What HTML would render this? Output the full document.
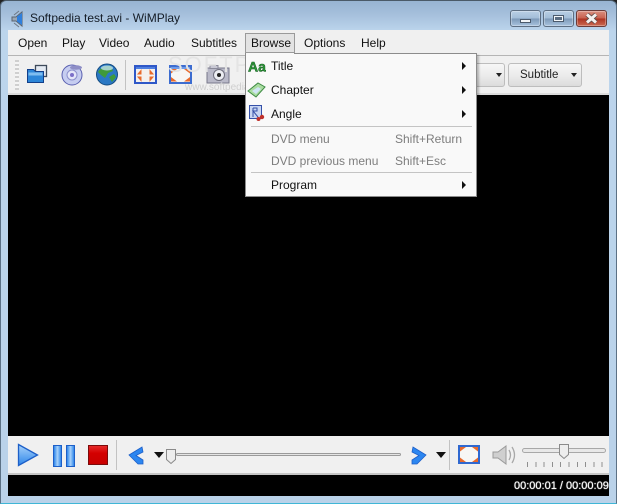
<!DOCTYPE html>
<html><head><meta charset="utf-8">
<style>
html,body{margin:0;padding:0;background:#fff}
#w{position:relative;width:617px;height:504px;overflow:hidden;background:#222;font-family:"Liberation Sans",sans-serif;font-size:12px;color:#111}
#w div,#w svg,#w span{position:absolute}
.t{white-space:nowrap;line-height:14px}
.g{color:#7d7d7d}
.btn{top:63px;height:24px;border:1px solid #bdbdbd;border-radius:3px;background:linear-gradient(#f7f7f7,#ececec 50%,#dcdcdc);box-sizing:border-box}
.wb{top:10px;height:17px;border:1px solid #5d6e82;border-radius:3px;box-sizing:border-box;background:linear-gradient(#b9cfe5,#a3bdd8 48%,#7d99b8 52%,#a8c3de);box-shadow:inset 0 0 0 1px rgba(255,255,255,.3)}
</style></head><body>
<div id="w">
<div style="left:0;top:0;width:617px;height:504px;background:linear-gradient(#97b4d2 0,#a6c0dc 14px,#bcd5ec 30px,#bad2e9 100%);border-radius:6px 6px 0 0;box-sizing:border-box;border:1px solid #4a5a68;border-bottom:1px solid #3fb6d6;border-left-color:#5c7185;border-right-color:#5c7185"></div>
<svg style="left:11px;top:10px" width="16" height="18" viewBox="0 0 16 18"><path d="M1 7h4l6-5v14l-6-5H1z" fill="#9aa6b4" stroke="#5a6470"/><path d="M6 6.500l5-3.500v12l-5-3.500z" fill="#2f7fdc"/><path d="M3 5l5-4M3 13l5 4" stroke="#6d7885"/></svg>
<div class="t" style="left:30px;top:11px;color:#141c26;font-size:12px">Softpedia test.avi - WiMPlay</div>
<div class="wb" style="left:510px;width:31px"></div>
<div style="left:520px;top:19px;width:9px;height:2px;background:#f2f5f8;border:1px solid #4b5a6c"></div>
<div class="wb" style="left:543px;width:31px"></div>
<div style="left:553px;top:15px;width:11px;height:7px;box-sizing:border-box;border:2px solid #f2f5f8;outline:1px solid #4b5a6c;outline-offset:-1px;background:#dfe7f0"></div>
<div style="left:553px;top:15px;width:11px;height:7px;box-sizing:border-box;border:1px solid #4b5a6c;background:#f2f5f8"></div>
<div style="left:555px;top:17px;width:7px;height:3px;background:#5b6d82"></div>
<div class="wb" style="left:576px;width:31px;border-color:#6b3b38;background:linear-gradient(#d98f80,#c9614f 48%,#ad3322 52%,#cb6a52)"></div>
<svg style="left:584px;top:13px" width="15" height="11" viewBox="0 0 15 11"><path d="M3 1.500L12 9.500M12 1.500L3 9.500" stroke="#5c4a48" stroke-width="4.600"/><path d="M3 1.500L12 9.500M12 1.500L3 9.500" stroke="#f4f0ee" stroke-width="3"/></svg>

<div style="left:8px;top:30px;width:601px;height:466px;background:#000"></div>
<div style="left:8px;top:30px;width:601px;height:25px;background:#f0f0f0"></div>
<div style="left:8px;top:55px;width:601px;height:1px;background:#b5b5b5"></div>
<div style="left:8px;top:56px;width:601px;height:37px;background:#f0f0f0"></div>
<div style="left:8px;top:93px;width:601px;height:2px;background:#dcdcdc"></div>

<div class="t" style="left:18px;top:36px">Open</div>
<div class="t" style="left:62px;top:36px">Play</div>
<div class="t" style="left:99px;top:36px">Video</div>
<div class="t" style="left:144px;top:36px">Audio</div>
<div class="t" style="left:191px;top:36px">Subtitles</div>
<div style="left:245px;top:33px;width:50px;height:20px;box-sizing:border-box;border:1px solid #9a9a9a;background:#e3e3e3"></div>
<div class="t" style="left:251px;top:36px">Browse</div>
<div class="t" style="left:304px;top:36px">Options</div>
<div class="t" style="left:361px;top:36px">Help</div>

<!-- toolbar -->
<div style="left:15px;top:60px;width:4px;height:30px;background:repeating-linear-gradient(#cfcfcf 0 2px,#f4f4f4 2px 4px)"></div>
<svg style="left:26px;top:64px" width="22" height="20" viewBox="0 0 22 20"><rect x="9.500" y="1.500" width="11" height="11" fill="#e4eaf2" stroke="#3e4a5a" stroke-width="1.300"/><path d="M1.500 5.500h6l2 2h8v11h-16z" fill="#2d86d8" stroke="#123f8a"/><rect x="2.500" y="8.500" width="14" height="3" fill="#7fbdf0"/></svg>
<svg style="left:61px;top:63px" width="23" height="23" viewBox="0 0 23 23"><circle cx="11" cy="12" r="10" fill="#c6cdf0" stroke="#5a60b0"/><circle cx="11" cy="12" r="5" fill="#e4e6f8" stroke="#8c90cc"/><circle cx="11" cy="12" r="2" fill="#7c70c8"/><ellipse cx="15" cy="4.500" rx="6" ry="2.200" fill="#8e8ec6"/></svg>
<svg style="left:95px;top:63px" width="24" height="23" viewBox="0 0 24 23"><circle cx="12" cy="11.500" r="10.500" fill="#2a78c4" stroke="#134b80"/><path d="M3 9c3-5 8-7 13-6l2 5-5 2-3 5-4-3zM14 14l5-3 2 3-4 5z" fill="#3f9a3a"/><ellipse cx="12" cy="5" rx="6" ry="2.500" fill="#bfe0ef" opacity=".8"/></svg>
<div style="left:125px;top:60px;width:1px;height:30px;background:#c2c2c2"></div>
<svg style="left:134px;top:65px" width="23" height="19" viewBox="0 0 23 19"><rect x="1" y="1" width="21" height="17" fill="#f4f1ee" stroke="#2f58c8" stroke-width="2"/><rect x="2" y="2" width="19" height="2" fill="#4f7fe0"/><path d="M7 5.500v3.500H4zM16 5.500v3.500h3zM7 15.500V12H4zM16 15.500V12h3z" fill="#e86a2c" stroke="#e86a2c"/></svg>
<svg style="left:169px;top:65px" width="23" height="19" viewBox="0 0 23 19"><rect x="1" y="1" width="21" height="17" fill="#f7f6f4" stroke="#3c6cd0" stroke-width="2"/><rect x="2" y="2" width="19" height="2" fill="#6f9be8"/><path d="M2.500 4.500h4l-4 3zM20.500 4.500h-4l4 3zM2.500 16h4l-4-3zM20.500 16h-4l4-3z" fill="#e86a2c" stroke="#e86a2c"/></svg>
<svg style="left:206px;top:64px" width="24" height="20" viewBox="0 0 24 20"><rect x="1" y="4" width="22" height="15" fill="#b9b9c8" stroke="#77778a"/><rect x="4" y="1.500" width="8" height="3" fill="#c8c8d4" stroke="#8a8a9a"/><circle cx="13" cy="11" r="5.500" fill="#ecedf2" stroke="#70707e"/><circle cx="13" cy="11" r="2" fill="#222"/></svg>
<div class="t" style="left:168px;top:58px;font-size:22px;color:#e4e4e4;letter-spacing:2px">SOFTPE</div>
<div class="t" style="left:185px;top:81px;font-size:10px;color:#cfcfcf">www.softpedia</div>

<div class="btn" style="left:440px;width:65px"></div>
<svg style="left:495px;top:73px" width="8" height="5"><path d="M1 0h6L4 4z" fill="#222"/></svg>
<div class="btn" style="left:508px;width:74px"></div>
<div class="t" style="left:520px;top:68px;color:#222;font-size:11.500px">Subtitle</div>
<svg style="left:570px;top:73px" width="8" height="5"><path d="M1 0h6L4 4z" fill="#222"/></svg>

<!-- menu -->
<div style="left:245px;top:53px;width:232px;height:144px;box-sizing:border-box;border:1px solid #8c8c8c;background:#f9f9f9;box-shadow:2px 2px 2px rgba(0,0,0,.25)"></div>
<div style="left:246px;top:53px;width:48px;height:1px;background:#f9f9f9"></div>
<svg style="left:248px;top:58px" width="18" height="15" viewBox="0 0 18 15"><text x="0" y="13.500" font-family="Liberation Sans,sans-serif" font-weight="bold" font-size="14" fill="#2f9a3a" stroke="#145c20" stroke-width=".5">Aa</text></svg>
<svg style="left:247px;top:82px" width="19" height="16" viewBox="0 0 19 16"><path d="M1 9l10-8 7 4-9 10z" fill="#a9dca0" stroke="#3f8a45"/><path d="M5 9l6-4 3 2-5 5z" fill="#cfe4f5"/></svg>
<svg style="left:249px;top:105px" width="17" height="17" viewBox="0 0 17 17"><rect x=".5" y=".5" width="12" height="13" fill="#c8d6f2" stroke="#3550a8"/><path d="M4 3v9M4 3h4v3H4l5 6" stroke="#3550a8" fill="none"/><circle cx="13" cy="12" r="2.200" fill="#c0302a"/><circle cx="9.500" cy="14" r="2" fill="#c0302a"/></svg>
<div class="t" style="left:271px;top:59px">Title</div>
<div class="t" style="left:271px;top:83px">Chapter</div>
<div class="t" style="left:271px;top:107px">Angle</div>
<div class="t g" style="left:271px;top:132px">DVD menu</div>
<div class="t g" style="left:395px;top:132px">Shift+Return</div>
<div class="t g" style="left:271px;top:154px">DVD previous menu</div>
<div class="t g" style="left:395px;top:154px">Shift+Esc</div>
<div class="t" style="left:271px;top:178px">Program</div>
<div style="left:251px;top:126px;width:221px;height:1px;background:#c4c4c4"></div>
<div style="left:251px;top:172px;width:221px;height:1px;background:#c4c4c4"></div>
<svg style="left:462px;top:62px" width="5" height="8"><path d="M0 0l4 4-4 4z" fill="#111"/></svg>
<svg style="left:462px;top:86px" width="5" height="8"><path d="M0 0l4 4-4 4z" fill="#111"/></svg>
<svg style="left:462px;top:110px" width="5" height="8"><path d="M0 0l4 4-4 4z" fill="#111"/></svg>
<svg style="left:462px;top:181px" width="5" height="8"><path d="M0 0l4 4-4 4z" fill="#111"/></svg>

<!-- controls -->
<div style="left:8px;top:436px;width:601px;height:37px;background:#f0f0f0"></div>
<div style="left:8px;top:473px;width:601px;height:2px;background:#c6c6c6"></div>
<svg style="left:17px;top:443px" width="22" height="24" viewBox="0 0 22 24"><defs><linearGradient id="b" x1="0" y1="0" x2="0" y2="1"><stop offset="0" stop-color="#a8d2fa"/><stop offset="1" stop-color="#2e86ea"/></linearGradient></defs><path d="M1.500 1.500L20.500 12 1.500 22.500z" fill="url(#b)" stroke="#1d5fc8" stroke-width="1.300"/></svg>
<div style="left:53px;top:445px;width:7px;height:20px;border:1px solid #1d5fc8;background:linear-gradient(90deg,#2e86ea,#a8d2fa 50%,#2e86ea)"></div>
<div style="left:66px;top:445px;width:7px;height:20px;border:1px solid #1d5fc8;background:linear-gradient(90deg,#2e86ea,#a8d2fa 50%,#2e86ea)"></div>
<div style="left:88px;top:445px;width:18px;height:18px;border:1px solid #7a0b0b;background:linear-gradient(#e52a2a,#d40000 40%,#c80000)"></div>
<div style="left:116px;top:440px;width:1px;height:30px;background:#c2c2c2"></div>
<svg style="left:128px;top:445px" width="17" height="20" viewBox="0 0 17 20"><path d="M1 10L14 2l1 5-7 3.500 7 4.500v4h-5z" fill="#2c86f0" stroke="#1d5fc8" stroke-width=".8"/></svg>
<svg style="left:154px;top:452px" width="10" height="6"><path d="M0 0h10L5 6z" fill="#111"/></svg>
<div style="left:176px;top:453px;width:225px;height:3px;box-sizing:border-box;border:1px solid #9a9a9a;background:#e4e4e4;border-radius:2px"></div>
<svg style="left:165px;top:448px" width="12" height="17" viewBox="0 0 12 17"><path d="M1.500 1.500h9v10l-4.500 4-4.500-4z" fill="#ededed" stroke="#8a8a8a"/></svg>
<svg style="left:411px;top:445px" width="17" height="20" viewBox="0 0 17 20"><path d="M15 10L2 2 1 7l7 3.500L1 15v4h5z" fill="#2c86f0" stroke="#1d5fc8" stroke-width=".8"/></svg>
<svg style="left:436px;top:452px" width="10" height="6"><path d="M0 0h10L5 6z" fill="#111"/></svg>
<div style="left:449px;top:440px;width:1px;height:30px;background:#c2c2c2"></div>
<svg style="left:458px;top:445px" width="22" height="19" viewBox="0 0 22 19"><rect x="1" y="1" width="20" height="17" fill="#f7f6f4" stroke="#2f68d0" stroke-width="2"/><path d="M2.500 2.500h4l-4 3zM19.500 2.500h-4l4 3zM2.500 16.500h4l-4-3zM19.500 16.500h-4l4-3z" fill="#e86a2c" stroke="#e86a2c"/></svg>
<svg style="left:492px;top:444px" width="24" height="22" viewBox="0 0 24 22"><path d="M1 8h5l8-6v18l-8-6H1z" fill="#cfcfcf" stroke="#9a9a9a"/><path d="M17 6q3 5 0 10M20 3q5 8 0 16" stroke="#a8a8a8" fill="none" stroke-width="1.300"/></svg>
<div style="left:522px;top:448px;width:84px;height:5px;box-sizing:border-box;border:1px solid #a8a8a8;background:#e8e8e8;border-radius:3px"></div>
<svg style="left:558px;top:443px" width="12" height="17" viewBox="0 0 12 17"><path d="M1.500 1.500h9v10l-4.500 4-4.500-4z" fill="#ededed" stroke="#8a8a8a"/></svg>
<div style="left:527px;top:462px;width:76px;height:5px;background:repeating-linear-gradient(90deg,#8f8f8f 0 1px,transparent 1px 8.300px)"></div>

<div class="t" style="left:514px;top:479px;color:#fff;font-size:11px;text-shadow:0 0 1px #fff">00:00:01 / 00:00:09</div>
</div>
</body></html>
